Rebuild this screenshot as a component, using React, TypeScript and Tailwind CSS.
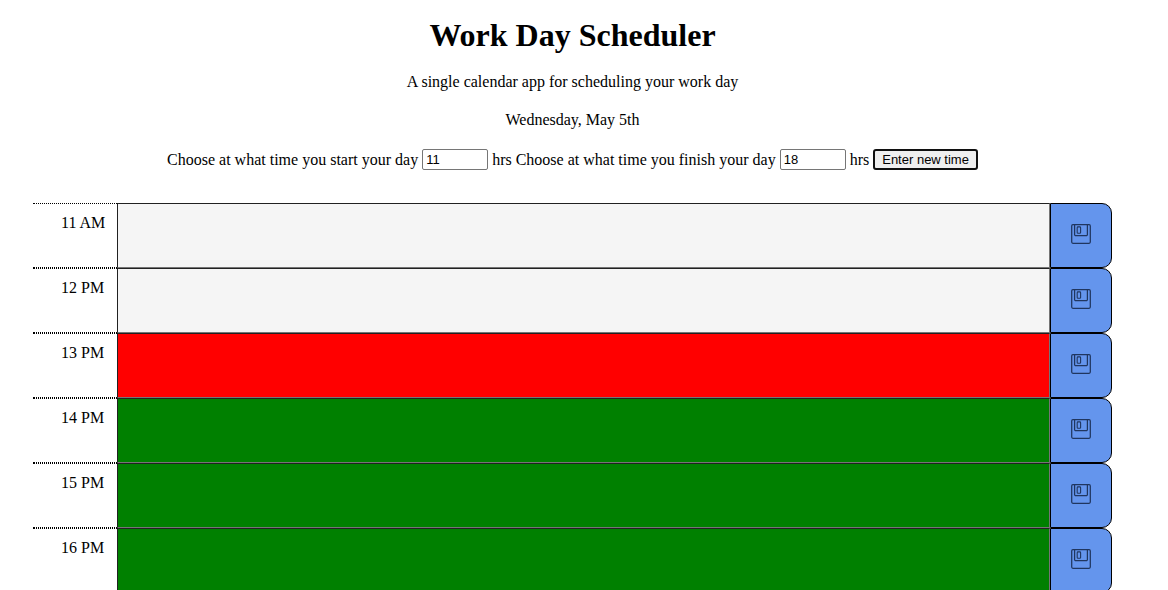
type Slot = { hour: number; tone: "past" | "present" | "future" };

const slots: Slot[] = [
  { hour: 11, tone: "past" },
  { hour: 12, tone: "past" },
  { hour: 13, tone: "present" },
  { hour: 14, tone: "future" },
  { hour: 15, tone: "future" },
  { hour: 16, tone: "future" },
];

const tones = {
  past: "bg-[#f5f5f5]",
  present: "bg-[#ff0000]",
  future: "bg-[#008000]",
};

function SaveIcon() {
  return (
    <svg width="20" height="20" viewBox="0 0 20 20" fill="none" stroke="#20365f" strokeWidth="1.25" aria-hidden="true">
      <rect x="0.7" y="0.7" width="18.6" height="18.6" rx="1.2" />
      <path d="M3.6 .7v9.8a1.2 1.2 0 0 0 1.2 1.2h10.4a1.2 1.2 0 0 0 1.2-1.2V.7" />
      <rect x="6.2" y="2.9" width="3.4" height="6.3" rx="0.8" strokeWidth="1.1" />
    </svg>
  );
}

function TimeBlock({ hour, tone }: Slot) {
  const label = `${hour} ${hour < 12 ? "AM" : "PM"}`;
  const id = `hour-${hour}`;
  return (
    <div className="flex h-[65px]">
      <label htmlFor={id} className="w-[84px] shrink-0 border-y border-dotted border-black pt-[10px] pl-7">
        {label}
      </label>
      <textarea
        id={id}
        className={`block min-w-0 flex-1 resize-none border border-t-[#212121] border-r-[#757575] border-b-[#757575] border-l-[#212121] p-1 outline-none ${tones[tone]}`}
      />
      <button
        type="button"
        aria-label={`Save ${label}`}
        className="flex w-[62px] shrink-0 items-center justify-center rounded-r-[10px] border border-black bg-[#6495ed] pb-1"
      >
        <SaveIcon />
      </button>
    </div>
  );
}

function HourField({ id, label, value }: { id: string; label: string; value: string }) {
  return (
    <>
      <label htmlFor={id}>{label}</label>
      <input
        id={id}
        type="text"
        inputMode="numeric"
        defaultValue={value}
        className="h-[21px] w-[66px] rounded-xs border border-[#767676] bg-white px-[3px] font-['Liberation_Sans',Arial,sans-serif] text-[13px] leading-4 outline-none"
      />
      <span>hrs</span>
    </>
  );
}

export default function App() {
  return (
    <main className="bg-white pt-[17px] pr-14 pl-[33px] font-['Liberation_Serif','Times_New_Roman',serif] text-base leading-[18px] text-black">
      <header className="flex flex-col items-center text-center">
        <h1 className="text-[32px] leading-[36px] font-bold">Work Day Scheduler</h1>
        <p className="mt-5">A single calendar app for scheduling your work day</p>
        <p className="mt-5">Wednesday, May 5th</p>
        <form className="mt-5 flex flex-wrap items-center justify-center gap-x-1" onSubmit={(e) => e.preventDefault()}>
          <HourField id="start" label="Choose at what time you start your day" value="11" />
          <HourField id="finish" label="Choose at what time you finish your day" value="18" />
          <button
            type="submit"
            className="h-[21px] rounded-[3px] border-2 border-[#101010] bg-[#efefef] px-[7px] font-['Liberation_Sans',Arial,sans-serif] text-[13px] leading-4"
          >
            Enter new time
          </button>
        </form>
      </header>
      <section aria-label="Schedule" className="mt-[33px]">
        {slots.map((slot) => (
          <TimeBlock key={slot.hour} {...slot} />
        ))}
      </section>
    </main>
  );
}
